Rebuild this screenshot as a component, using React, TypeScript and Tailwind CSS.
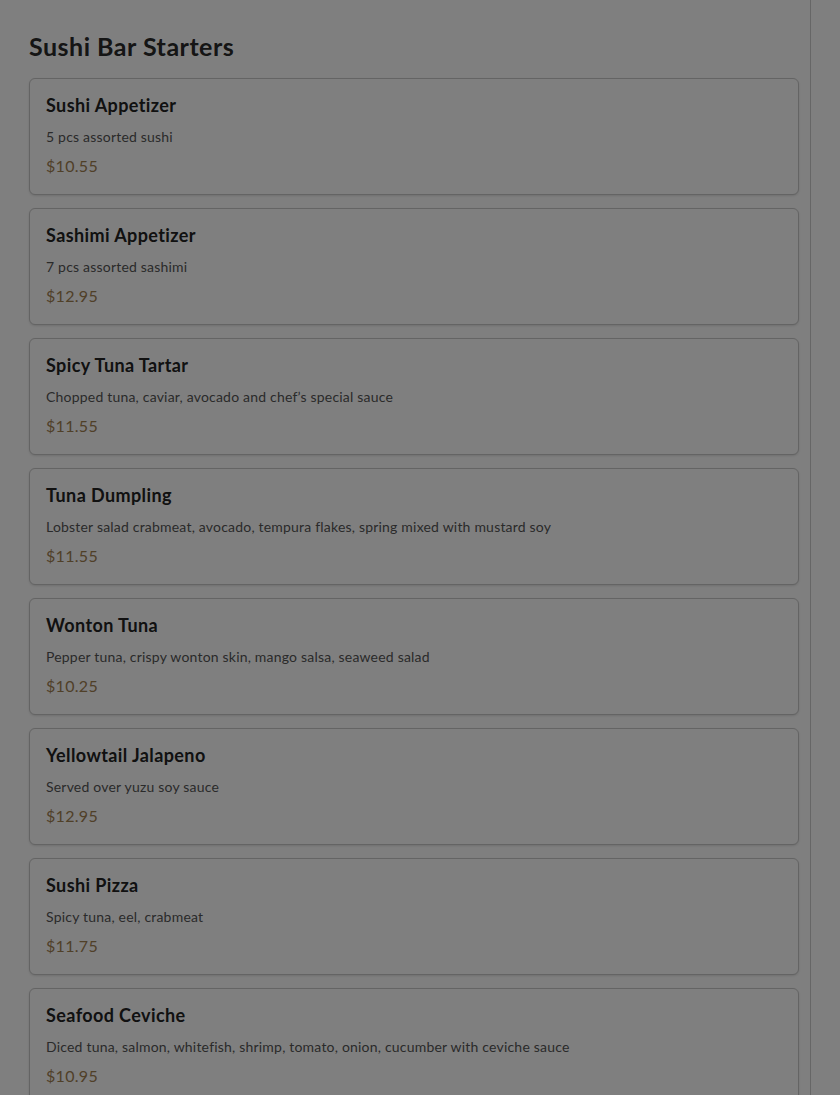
import React from "react";

const items = [
  { name: "Sushi Appetizer", desc: "5 pcs assorted sushi", price: "$10.55" },
  { name: "Sashimi Appetizer", desc: "7 pcs assorted sashimi", price: "$12.95" },
  { name: "Spicy Tuna Tartar", desc: "Chopped tuna, caviar, avocado and chef\u2019s special sauce", price: "$11.55" },
  { name: "Tuna Dumpling", desc: "Lobster salad crabmeat, avocado, tempura flakes, spring mixed with mustard soy", price: "$11.55" },
  { name: "Wonton Tuna", desc: "Pepper tuna, crispy wonton skin, mango salsa, seaweed salad", price: "$10.25" },
  { name: "Yellowtail Jalapeno", desc: "Served over yuzu soy sauce", price: "$12.95" },
  { name: "Sushi Pizza", desc: "Spicy tuna, eel, crabmeat", price: "$11.75" },
  { name: "Seafood Ceviche", desc: "Diced tuna, salmon, whitefish, shrimp, tomato, onion, cucumber with ceviche sauce", price: "$10.95" },
];

export default function App() {
  return (
    <div className="min-h-screen bg-white" style={{ fontFamily: "Lato, 'Noto Sans', sans-serif" }}>
      <div className="w-[811px] border-r border-[#cccccc] pl-[29px] pr-[11px] pt-[30px] pb-8 min-h-screen">
        <h2 className="text-[25px] leading-[32px] font-bold tracking-[0.5px] text-[#2a2a2a]">Sushi Bar Starters</h2>
        <div className="mt-4 flex flex-col gap-[13px]">
          {items.map((it) => (
            <div key={it.name} className="rounded-md border border-[#c8c8c8] bg-white p-4 shadow-sm">
              <div className="text-[18px] leading-[20px] font-bold tracking-[0.4px] text-[#222]">{it.name}</div>
              <div className="mt-3 text-[14px] leading-[20px] tracking-[0.2px] text-[#555]">{it.desc}</div>
              <div className="mt-[7px] text-[16px] leading-[24px] tracking-[0.3px] text-[#a08050]">{it.price}</div>
            </div>
          ))}
        </div>
      </div>
      <div className="fixed inset-0 bg-black/50" />
    </div>
  );
}
